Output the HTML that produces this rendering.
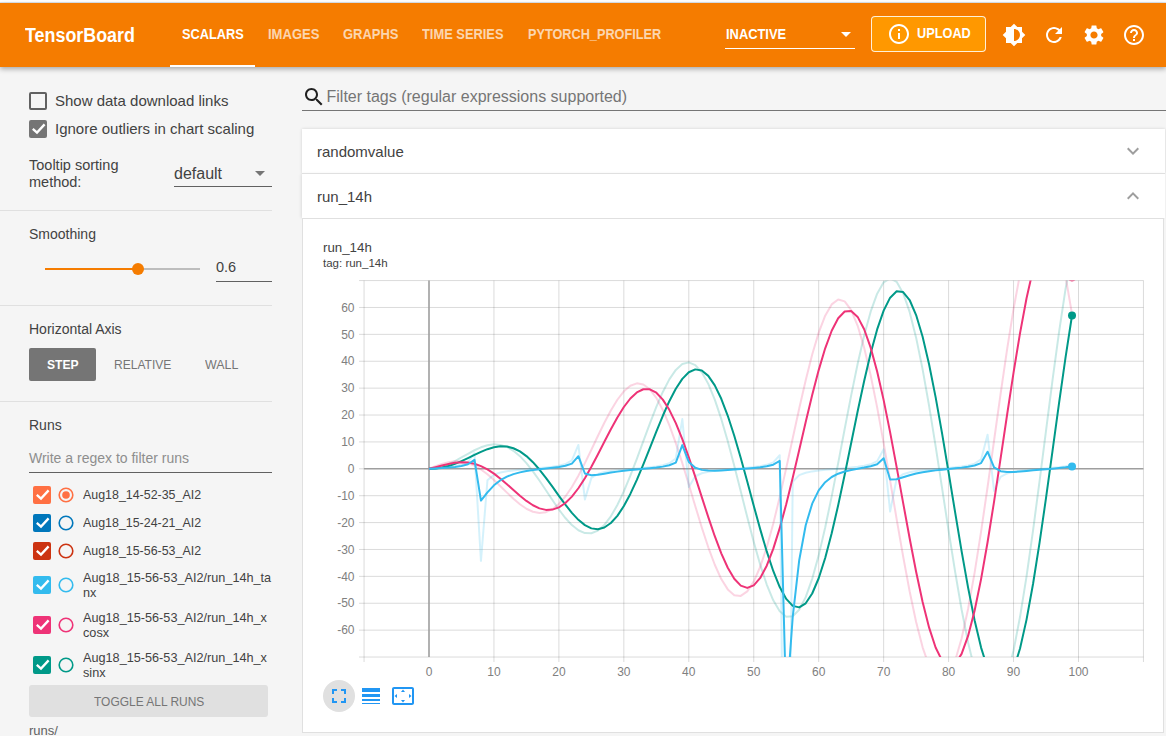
<!DOCTYPE html>
<html><head><meta charset="utf-8">
<style>
*{box-sizing:border-box;margin:0;padding:0}
html,body{width:1166px;height:736px;overflow:hidden;background:#f5f5f5;font-family:"Liberation Sans",sans-serif;position:relative}
.a{position:absolute;white-space:nowrap}
#top{left:0;top:0;width:1166px;height:3px;background:#fff}
#hdr{left:0;top:3px;width:1166px;height:64px;background:#f57c00;box-shadow:0 2px 5px rgba(0,0,0,.32);z-index:2}
.tab{font-weight:bold;font-size:14px;color:rgba(255,255,255,.7);top:23px;transform-origin:0 0}
.sx{transform-origin:0 0}
.ico{position:absolute;width:24px;height:24px}
.side{color:#424242}
.divider{position:absolute;left:0;width:272px;height:1px;background:#e0e0e0}
</style></head><body>
<div class="a" id="top"></div><div class="a" style="left:0;top:2px;width:1166px;height:1px;background:#dfe7ef"></div>
<div class="a" id="hdr">
  <div class="a sx" style="left:25px;top:21px;font-size:20px;font-weight:bold;color:#fff;transform:scaleX(0.894)">TensorBoard</div>
  <div class="a tab" style="left:182px;color:#fff;transform:scaleX(0.912)">SCALARS</div>
  <div class="a" style="left:170px;top:62px;width:85px;height:2px;background:#fff"></div>
  <div class="a tab" style="left:267.5px;transform:scaleX(0.931)">IMAGES</div>
  <div class="a tab" style="left:343px;transform:scaleX(0.927)">GRAPHS</div>
  <div class="a tab" style="left:422px;transform:scaleX(0.919)">TIME SERIES</div>
  <div class="a tab" style="left:527.5px;transform:scaleX(0.907)">PYTORCH_PROFILER</div>
  <div class="a tab" style="left:725.5px;color:#fff;transform:scaleX(0.92)">INACTIVE</div>
  <div class="a" style="left:841px;top:29px;width:0;height:0;border-left:5px solid transparent;border-right:5px solid transparent;border-top:5px solid #fff"></div>
  <div class="a" style="left:725px;top:45px;width:130px;height:1px;background:#fff"></div>
  <div class="a" style="left:871px;top:13px;width:115px;height:36px;border:1px solid rgba(255,255,255,.85);border-radius:4px;background:#ff9800"></div>
  <svg class="ico" style="left:887px;top:19px" viewBox="0 0 24 24"><path fill="#fff" d="M11 7h2v2h-2zm0 4h2v6h-2zm1-9C6.48 2 2 6.48 2 12s4.48 10 10 10 10-4.48 10-10S17.52 2 12 2zm0 18c-4.41 0-8-3.59-8-8s3.59-8 8-8 8 3.59 8 8-3.59 8-8 8z"/></svg>
  <div class="a tab" style="left:917px;top:22px;color:#fff;transform:scaleX(0.91)">UPLOAD</div>
  <svg class="ico" style="left:1002px;top:20px" viewBox="0 0 24 24"><path fill="#fff" d="M20 15.31L23.31 12 20 8.69V4h-4.69L12 .69 8.69 4H4v4.69L.69 12 4 15.31V20h4.69L12 23.31 15.31 20H20v-4.69zM12 18V6c3.31 0 6 2.69 6 6s-2.69 6-6 6z"/></svg>
  <svg class="ico" style="left:1042px;top:20px" viewBox="0 0 24 24"><path fill="#fff" d="M17.65 6.35C16.2 4.9 14.21 4 12 4c-4.42 0-7.99 3.58-7.99 8s3.57 8 7.99 8c3.73 0 6.84-2.55 7.73-6h-2.08c-.82 2.33-3.04 4-5.65 4-3.31 0-6-2.69-6-6s2.69-6 6-6c1.66 0 3.14.69 4.22 1.78L13 11h7V4l-2.35 2.35z"/></svg>
  <svg class="ico" style="left:1082px;top:20px" viewBox="0 0 24 24"><path fill="#fff" d="M19.14 12.94c.04-.3.06-.61.06-.94 0-.32-.02-.64-.07-.94l2.03-1.58c.18-.14.23-.41.12-.61l-1.92-3.32c-.12-.22-.37-.29-.59-.22l-2.39.96c-.5-.38-1.03-.7-1.62-.94l-.36-2.54c-.04-.24-.24-.41-.48-.41h-3.84c-.24 0-.43.17-.47.41l-.36 2.54c-.59.24-1.13.57-1.62.94l-2.39-.96c-.22-.08-.47 0-.59.22L2.74 8.87c-.12.21-.08.47.12.61l2.030 1.58c-.05.3-.09.63-.09.94s.02.64.07.94l-2.030 1.58c-.18.14-.23.41-.12.61l1.92 3.32c.12.22.37.29.59.22l2.39-.96c.5.38 1.03.7 1.62.94l.36 2.54c.05.24.24.41.48.41h3.84c.24 0 .44-.17.47-.41l.36-2.54c.59-.24 1.13-.56 1.62-.94l2.39.96c.22.08.47 0 .59-.22l1.92-3.32c.12-.22.07-.47-.12-.61l-2.01-1.58zM12 15.6c-1.98 0-3.6-1.62-3.6-3.6s1.62-3.6 3.6-3.6 3.6 1.62 3.6 3.6-1.62 3.6-3.6 3.6z"/></svg>
  <svg class="ico" style="left:1122px;top:20px" viewBox="0 0 24 24"><path fill="#fff" d="M11 18h2v-2h-2v2zm1-16C6.48 2 2 6.48 2 12s4.48 10 10 10 10-4.48 10-10S17.52 2 12 2zm0 18c-4.41 0-8-3.59-8-8s3.59-8 8-8 8 3.59 8 8-3.59 8-8 8zm0-14c-2.21 0-4 1.79-4 4h2c0-1.1.9-2 2-2s2 .9 2 2c0 2-3 1.75-3 5h2c0-2.25 3-2.5 3-5 0-2.21-1.79-4-4-4z"/></svg>
</div>
<!-- SIDEBAR -->
<div class="a" style="left:29px;top:92px;width:18px;height:18px;border:2px solid #616161;border-radius:2px"></div>
<div class="a side" style="left:55px;top:92px;font-size:15px">Show data download links</div>
<div class="a" style="left:29px;top:120px;width:18px;height:18px;background:#757575;border-radius:2px"></div>
<svg class="a" style="left:29px;top:120px" width="18" height="18" viewBox="0 0 18 18"><path d="M3.8 8.8L8 12.6L15.6 4.4" stroke="#fff" stroke-width="2.3" fill="none"/></svg>
<div class="a side" style="left:55px;top:120px;font-size:15px">Ignore outliers in chart scaling</div>
<div class="a side" style="left:29px;top:157px;font-size:14.5px;line-height:16.5px;color:#424242">Tooltip sorting<br>method:</div>
<div class="a side" style="left:174px;top:164.5px;font-size:16px;color:#424242">default</div>
<div class="a" style="left:255px;top:171px;width:0;height:0;border-left:5px solid transparent;border-right:5px solid transparent;border-top:5px solid #757575"></div>
<div class="a" style="left:174px;top:186px;width:98px;height:1px;background:#616161"></div>
<div class="divider" style="top:210px"></div>
<div class="a side" style="left:29px;top:226px;font-size:14px;color:#424242">Smoothing</div>
<div class="a" style="left:45px;top:268px;width:92px;height:2px;background:#f57c00"></div>
<div class="a" style="left:137px;top:268px;width:63px;height:2px;background:#bdbdbd"></div>
<div class="a" style="left:131.7px;top:263px;width:12.2px;height:12.2px;border-radius:50%;background:#f57c00"></div>
<div class="a side" style="left:216px;top:259px;font-size:14.5px;color:#424242">0.6</div>
<div class="a" style="left:216px;top:281px;width:56px;height:1px;background:#616161"></div>
<div class="divider" style="top:305px"></div>
<div class="a side" style="left:29px;top:321px;font-size:14px;color:#424242">Horizontal Axis</div>
<div class="a" style="left:29px;top:348px;width:67px;height:33px;background:#757575;border-radius:2px"></div>
<div class="a sx" style="left:46.8px;top:357px;font-size:13px;font-weight:bold;color:#fff;transform:scaleX(0.93)">STEP</div>
<div class="a sx" style="left:113.6px;top:357px;font-size:13px;color:#757575;transform:scaleX(0.926)">RELATIVE</div>
<div class="a sx" style="left:204.6px;top:357px;font-size:13px;color:#757575;transform:scaleX(0.956)">WALL</div>
<div class="divider" style="top:401px"></div>
<div class="a side" style="left:29px;top:417px;font-size:14px;color:#424242">Runs</div>
<div class="a" style="left:29px;top:450px;font-size:14px;color:#8e8e8e">Write a regex to filter runs</div>
<div class="a" style="left:29px;top:472px;width:243px;height:1px;background:#616161"></div>
<div class="a" style="left:33px;top:486px;width:18px;height:18px;background:#ff7043;border-radius:2px"></div>
<svg class="a" style="left:33px;top:486px" width="18" height="18" viewBox="0 0 18 18"><path d="M3.8 8.8L8 12.6L15.6 4.4" stroke="#fff" stroke-width="2.3" fill="none"/></svg>
<svg class="a" style="left:58px;top:487px" width="16" height="16" viewBox="0 0 16 16"><circle cx="8" cy="8" r="6.8" stroke="#ff7043" stroke-width="1.6" fill="none"/><circle cx="8" cy="8" r="3.8" fill="#ff7043"/></svg>
<div class="a sx" style="left:83.2px;top:486.5px;font-size:13px;color:#424242;transform:scaleX(0.955)">Aug18_14-52-35_AI2</div>
<div class="a" style="left:33px;top:514px;width:18px;height:18px;background:#0077bb;border-radius:2px"></div>
<svg class="a" style="left:33px;top:514px" width="18" height="18" viewBox="0 0 18 18"><path d="M3.8 8.8L8 12.6L15.6 4.4" stroke="#fff" stroke-width="2.3" fill="none"/></svg>
<svg class="a" style="left:58px;top:515px" width="16" height="16" viewBox="0 0 16 16"><circle cx="8" cy="8" r="6.8" stroke="#0077bb" stroke-width="1.6" fill="none"/></svg>
<div class="a sx" style="left:83.2px;top:514.5px;font-size:13px;color:#424242;transform:scaleX(0.955)">Aug18_15-24-21_AI2</div>
<div class="a" style="left:33px;top:542px;width:18px;height:18px;background:#cc3311;border-radius:2px"></div>
<svg class="a" style="left:33px;top:542px" width="18" height="18" viewBox="0 0 18 18"><path d="M3.8 8.8L8 12.6L15.6 4.4" stroke="#fff" stroke-width="2.3" fill="none"/></svg>
<svg class="a" style="left:58px;top:543px" width="16" height="16" viewBox="0 0 16 16"><circle cx="8" cy="8" r="6.8" stroke="#cc3311" stroke-width="1.6" fill="none"/></svg>
<div class="a sx" style="left:83.2px;top:542.5px;font-size:13px;color:#424242;transform:scaleX(0.955)">Aug18_15-56-53_AI2</div>
<div class="a" style="left:33px;top:576px;width:18px;height:18px;background:#33bbee;border-radius:2px"></div>
<svg class="a" style="left:33px;top:576px" width="18" height="18" viewBox="0 0 18 18"><path d="M3.8 8.8L8 12.6L15.6 4.4" stroke="#fff" stroke-width="2.3" fill="none"/></svg>
<svg class="a" style="left:58px;top:577px" width="16" height="16" viewBox="0 0 16 16"><circle cx="8" cy="8" r="6.8" stroke="#33bbee" stroke-width="1.6" fill="none"/></svg>
<div class="a sx" style="left:83.2px;top:571.0px;font-size:13px;line-height:14.5px;color:#424242;transform:scaleX(0.975)">Aug18_15-56-53_AI2/run_14h_ta<br>nx</div>
<div class="a" style="left:33px;top:616px;width:18px;height:18px;background:#ee3377;border-radius:2px"></div>
<svg class="a" style="left:33px;top:616px" width="18" height="18" viewBox="0 0 18 18"><path d="M3.8 8.8L8 12.6L15.6 4.4" stroke="#fff" stroke-width="2.3" fill="none"/></svg>
<svg class="a" style="left:58px;top:617px" width="16" height="16" viewBox="0 0 16 16"><circle cx="8" cy="8" r="6.8" stroke="#ee3377" stroke-width="1.6" fill="none"/></svg>
<div class="a sx" style="left:83.2px;top:611.0px;font-size:13px;line-height:14.5px;color:#424242;transform:scaleX(0.975)">Aug18_15-56-53_AI2/run_14h_x<br>cosx</div>
<div class="a" style="left:33px;top:656px;width:18px;height:18px;background:#009988;border-radius:2px"></div>
<svg class="a" style="left:33px;top:656px" width="18" height="18" viewBox="0 0 18 18"><path d="M3.8 8.8L8 12.6L15.6 4.4" stroke="#fff" stroke-width="2.3" fill="none"/></svg>
<svg class="a" style="left:58px;top:657px" width="16" height="16" viewBox="0 0 16 16"><circle cx="8" cy="8" r="6.8" stroke="#009988" stroke-width="1.6" fill="none"/></svg>
<div class="a sx" style="left:83.2px;top:651.0px;font-size:13px;line-height:14.5px;color:#424242;transform:scaleX(0.975)">Aug18_15-56-53_AI2/run_14h_x<br>sinx</div>
<div class="a" style="left:29px;top:685px;width:239px;height:32px;background:#e0e0e0;border-radius:3px"></div>
<div class="a sx" style="left:93.9px;top:694px;font-size:13px;color:#757575;transform:scaleX(0.92)">TOGGLE ALL RUNS</div>
<div class="a side" style="left:29px;top:723px;font-size:13px;color:#616161">runs/</div>
<!-- MAIN -->
<svg class="ico" style="left:302px;top:85px" viewBox="0 0 24 24"><path fill="#212121" d="M15.5 14h-.79l-.28-.27C15.41 12.59 16 11.11 16 9.5 16 5.91 13.09 3 9.5 3S3 5.91 3 9.5 5.91 16 9.5 16c1.61 0 3.09-.59 4.23-1.57l.27.28v.79l5 4.99L20.49 19l-4.99-5zm-6 0C7.01 14 5 11.99 5 9.5S7.01 5 9.5 5 14 7.01 14 9.5 11.99 14 9.5 14z"/></svg>
<div class="a" style="left:326.5px;top:88px;font-size:16px;color:#757575">Filter tags (regular expressions supported)</div>
<div class="a" style="left:302px;top:110px;width:864px;height:1px;background:#757575"></div>
<div class="a" style="left:302px;top:129px;width:863px;height:44px;background:#fff;box-shadow:0 0 3px rgba(0,0,0,.15)"></div>
<div class="a" style="left:317px;top:143px;font-size:15px;color:#424242">randomvalue</div>
<svg class="ico" style="left:1121px;top:139px" viewBox="0 0 24 24"><path fill="#9e9e9e" d="M16.59 8.59L12 13.17 7.41 8.59 6 10l6 6 6-6z"/></svg>
<div class="a" style="left:302px;top:174px;width:863px;height:44px;background:#fff;box-shadow:-1px 0 3px rgba(0,0,0,.1)"></div>
<div class="a" style="left:302px;top:173px;width:863px;height:1px;background:#e0e0e0"></div>
<div class="a" style="left:317px;top:188px;font-size:15px;color:#424242">run_14h</div>
<svg class="ico" style="left:1121px;top:184px" viewBox="0 0 24 24"><path fill="#9e9e9e" d="M12 8l-6 6 1.41 1.41L12 10.83l4.59 4.58L18 14z"/></svg>
<div class="a" style="left:302px;top:218px;width:862px;height:515px;background:#fff;border:1px solid #e0e0e0"></div>
<div class="a" style="left:323px;top:240px;font-size:13.3px;color:#424242">run_14h</div>
<div class="a" style="left:323px;top:257px;font-size:11.5px;color:#424242">tag: run_14h</div>
<svg class="a" style="left:0;top:0" width="1166" height="736" viewBox="0 0 1166 736">
<defs><clipPath id="cp"><rect x="364.05" y="280.57" width="779.40" height="376.46"/></clipPath></defs>
<g stroke="#000" stroke-opacity="0.145" stroke-width="1"><line x1="364.05" y1="280.57" x2="364.05" y2="662.03"/><line x1="493.95" y1="280.57" x2="493.95" y2="662.03"/><line x1="558.90" y1="280.57" x2="558.90" y2="662.03"/><line x1="623.85" y1="280.57" x2="623.85" y2="662.03"/><line x1="688.80" y1="280.57" x2="688.80" y2="662.03"/><line x1="753.75" y1="280.57" x2="753.75" y2="662.03"/><line x1="818.70" y1="280.57" x2="818.70" y2="662.03"/><line x1="883.65" y1="280.57" x2="883.65" y2="662.03"/><line x1="948.60" y1="280.57" x2="948.60" y2="662.03"/><line x1="1013.55" y1="280.57" x2="1013.55" y2="662.03"/><line x1="1078.50" y1="280.57" x2="1078.50" y2="662.03"/><line x1="1143.45" y1="280.57" x2="1143.45" y2="662.03"/><line x1="359.05" y1="657.03" x2="1143.45" y2="657.03"/><line x1="359.05" y1="630.14" x2="1143.45" y2="630.14"/><line x1="359.05" y1="603.25" x2="1143.45" y2="603.25"/><line x1="359.05" y1="576.36" x2="1143.45" y2="576.36"/><line x1="359.05" y1="549.47" x2="1143.45" y2="549.47"/><line x1="359.05" y1="522.58" x2="1143.45" y2="522.58"/><line x1="359.05" y1="495.69" x2="1143.45" y2="495.69"/><line x1="359.05" y1="468.80" x2="364.05" y2="468.80"/><line x1="359.05" y1="441.91" x2="1143.45" y2="441.91"/><line x1="359.05" y1="415.02" x2="1143.45" y2="415.02"/><line x1="359.05" y1="388.13" x2="1143.45" y2="388.13"/><line x1="359.05" y1="361.24" x2="1143.45" y2="361.24"/><line x1="359.05" y1="334.35" x2="1143.45" y2="334.35"/><line x1="359.05" y1="307.46" x2="1143.45" y2="307.46"/><line x1="359.05" y1="280.57" x2="1143.45" y2="280.57"/></g>
<g stroke="#9e9e9e" stroke-width="1.6"><line x1="429.00" y1="280.57" x2="429.00" y2="657.03"/><line x1="364.05" y1="468.80" x2="1143.45" y2="468.80"/></g>
<g font-family="Liberation Sans" font-size="12" fill="#808080"><text x="354.5" y="634.34" text-anchor="end">-60</text><text x="354.5" y="607.45" text-anchor="end">-50</text><text x="354.5" y="580.56" text-anchor="end">-40</text><text x="354.5" y="553.67" text-anchor="end">-30</text><text x="354.5" y="526.78" text-anchor="end">-20</text><text x="354.5" y="499.89" text-anchor="end">-10</text><text x="354.5" y="473.00" text-anchor="end">0</text><text x="354.5" y="446.11" text-anchor="end">10</text><text x="354.5" y="419.22" text-anchor="end">20</text><text x="354.5" y="392.33" text-anchor="end">30</text><text x="354.5" y="365.44" text-anchor="end">40</text><text x="354.5" y="338.55" text-anchor="end">50</text><text x="354.5" y="311.66" text-anchor="end">60</text><text x="429.00" y="676" text-anchor="middle">0</text><text x="493.95" y="676" text-anchor="middle">10</text><text x="558.90" y="676" text-anchor="middle">20</text><text x="623.85" y="676" text-anchor="middle">30</text><text x="688.80" y="676" text-anchor="middle">40</text><text x="753.75" y="676" text-anchor="middle">50</text><text x="818.70" y="676" text-anchor="middle">60</text><text x="883.65" y="676" text-anchor="middle">70</text><text x="948.60" y="676" text-anchor="middle">80</text><text x="1013.55" y="676" text-anchor="middle">90</text><text x="1078.50" y="676" text-anchor="middle">100</text></g>
<g clip-path="url(#cp)" stroke-linejoin="round"><path d="M429.00,468.80L435.50,468.27L441.99,466.71L448.49,464.25L454.98,461.08L461.48,457.49L467.97,453.76L474.47,450.25L480.96,447.30L487.45,445.23L493.95,444.35L500.44,444.89L506.94,447.00L513.43,450.78L519.93,456.19L526.42,463.11L532.92,471.31L539.41,480.48L545.91,490.22L552.40,500.06L558.90,509.50L565.39,518.02L571.89,525.09L578.38,530.26L584.88,533.09L591.38,533.26L597.87,530.57L604.37,524.91L610.86,516.33L617.36,505.03L623.85,491.34L630.35,475.73L636.84,458.77L643.34,441.15L649.83,423.63L656.33,406.97L662.82,391.97L669.32,379.38L675.81,369.90L682.31,364.08L688.80,362.38L695.30,365.09L701.79,372.28L708.29,383.88L714.78,399.59L721.27,418.93L727.77,441.23L734.26,465.67L740.76,491.30L747.25,517.09L753.75,541.94L760.25,564.78L766.74,584.55L773.24,600.31L779.73,611.24L786.23,616.69L792.72,616.25L799.22,609.71L805.71,597.13L812.20,578.83L818.70,555.37L825.19,527.56L831.69,496.41L838.18,463.10L844.68,428.96L851.17,395.36L857.67,363.72L864.16,335.41L870.66,311.70L877.15,293.71L883.65,282.34L890.14,278.26L896.64,281.84L903.13,293.16L909.63,311.95L916.12,337.65L922.62,369.40L929.12,406.04L935.61,446.20L942.11,488.32L948.60,530.73L955.10,571.70L961.59,609.50L968.09,642.52L974.58,669.28L981.08,688.54L987.57,699.34L994.07,701.03L1000.56,693.33L1007.06,676.34L1013.55,650.55L1020.04,616.80L1026.54,576.31L1033.03,530.56L1039.53,481.32L1046.03,430.51L1052.52,380.18L1059.01,332.37L1065.51,289.09L1072.01,252.19" stroke="#009988" stroke-opacity="0.21" stroke-width="2" fill="none"/><path d="M429.00,468.80L435.50,466.16L441.99,463.85L448.49,462.14L454.98,461.31L461.48,461.54L467.97,462.95L474.47,465.60L480.96,469.43L487.45,474.30L493.95,479.99L500.44,486.21L506.94,492.59L513.43,498.75L519.93,504.27L526.42,508.73L532.92,511.75L539.41,513.00L545.91,512.20L552.40,509.21L558.90,503.95L565.39,496.48L571.89,486.98L578.38,475.74L584.88,463.15L591.38,449.73L597.87,436.04L604.37,422.72L610.86,410.41L617.36,399.75L623.85,391.34L630.35,385.73L636.84,383.34L643.34,384.48L649.83,389.31L656.33,397.85L662.82,409.91L669.32,425.17L675.81,443.13L682.31,463.14L688.80,484.45L695.30,506.19L701.79,527.45L708.29,547.28L714.78,564.77L721.27,579.05L727.77,589.38L734.26,595.14L740.76,595.90L747.25,591.39L753.75,581.61L760.25,566.75L766.74,547.24L773.24,523.72L779.73,497.02L786.23,468.15L792.72,438.23L799.22,408.49L805.71,380.17L812.20,354.50L818.70,332.65L825.19,315.66L831.69,304.38L838.18,299.49L844.68,301.38L851.17,310.19L857.67,325.78L864.16,347.70L870.66,375.23L877.15,407.42L883.65,443.06L890.14,480.79L896.64,519.10L903.13,556.44L909.63,591.25L916.12,622.01L922.62,647.36L929.12,666.11L935.61,677.32L942.11,680.33L948.60,674.81L955.10,660.77L961.59,638.57L968.09,608.92L974.58,572.86L981.08,531.69L987.57,486.99L994.07,440.51L1000.56,394.08L1007.06,349.63L1013.55,309.00L1020.04,273.93L1026.54,245.99L1033.03,226.47L1039.53,216.34L1046.03,216.23L1052.52,226.35L1059.01,246.49L1065.51,276.06L1072.01,314.05" stroke="#ee3377" stroke-opacity="0.21" stroke-width="2" fill="none"/><path d="M429.00,468.80L435.50,468.25L441.99,467.66L448.49,466.96L454.98,466.03L461.48,464.61L467.97,461.88L474.47,453.21L480.96,560.85L487.45,480.33L493.95,474.68L500.44,472.49L506.94,471.26L513.43,470.42L519.93,469.76L526.42,469.18L532.92,468.64L539.41,468.09L545.91,467.47L552.40,466.72L558.90,465.69L565.39,464.02L571.89,460.47L578.38,444.97L584.88,499.41L591.38,477.89L597.87,473.87L604.37,472.07L610.86,470.99L617.36,470.21L623.85,469.58L630.35,469.02L636.84,468.48L643.34,467.92L649.83,467.27L656.33,466.46L662.82,465.29L669.32,463.29L675.81,458.44L682.31,419.04L688.80,487.08L695.30,476.26L701.79,473.23L708.29,471.71L714.78,470.74L721.27,470.02L727.77,469.41L734.26,468.87L740.76,468.32L747.25,467.74L753.75,467.06L760.25,466.17L766.74,464.83L773.24,462.36L779.73,455.23L786.23,1076.38L792.72,481.77L799.22,475.08L805.71,472.69L812.20,471.39L818.70,470.51L825.19,469.83L831.69,469.25L838.18,468.71L844.68,468.16L851.17,467.55L857.67,466.82L864.16,465.84L870.66,464.29L877.15,461.13L883.65,449.32L890.14,511.54L896.64,478.79L903.13,474.19L909.63,472.24L916.12,471.10L922.62,470.30L929.12,469.66L935.61,469.09L942.11,468.55L948.60,467.99L955.10,467.36L961.59,466.57L968.09,465.47L974.58,463.62L981.08,459.40L987.57,434.73L994.07,490.87L1000.56,476.88L1007.06,473.48L1013.55,471.86L1020.04,470.84L1026.54,470.10L1033.03,469.49L1039.53,468.93L1046.03,468.39L1052.52,467.82L1059.01,467.15L1065.51,466.29L1072.01,465.04" stroke="#33bbee" stroke-opacity="0.21" stroke-width="2" fill="none"/><path d="M429.00,468.80L435.50,468.47L441.99,467.57L448.49,466.04L454.98,463.89L461.48,461.20L467.97,458.14L474.47,454.93L480.96,451.85L487.45,449.18L493.95,447.24L500.44,446.30L506.94,446.58L513.43,448.26L519.93,451.43L526.42,456.10L532.92,462.19L539.41,469.51L545.91,477.79L552.40,486.70L558.90,495.82L565.39,504.70L571.89,512.86L578.38,519.82L584.88,525.13L591.38,528.38L597.87,529.25L604.37,527.51L610.86,523.04L617.36,515.84L623.85,506.04L630.35,493.91L636.84,479.86L643.34,464.38L649.83,448.08L656.33,431.63L662.82,415.77L669.32,401.21L675.81,388.69L682.31,378.84L688.80,372.26L695.30,369.39L701.79,370.55L708.29,375.88L714.78,385.37L721.27,398.79L727.77,415.77L734.26,435.73L740.76,457.96L747.25,481.61L753.75,505.74L760.25,529.36L766.74,551.44L773.24,570.99L779.73,587.09L786.23,598.93L792.72,605.86L799.22,607.40L805.71,603.29L812.20,593.51L818.70,578.25L825.19,557.98L831.69,533.35L838.18,505.25L844.68,474.73L851.17,442.98L857.67,411.28L864.16,380.93L870.66,353.24L877.15,329.43L883.65,310.59L890.14,297.66L896.64,291.33L903.13,292.06L909.63,300.02L916.12,315.07L922.62,336.80L929.12,364.50L935.61,397.18L942.11,433.64L948.60,472.48L955.10,512.16L961.59,551.10L968.09,587.67L974.58,620.31L981.08,647.60L987.57,668.30L994.07,681.39L1000.56,686.16L1007.06,682.23L1013.55,669.56L1020.04,648.46L1026.54,619.60L1033.03,583.98L1039.53,542.92L1046.03,497.96L1052.52,450.84L1059.01,403.45L1065.51,357.71L1072.01,315.50" stroke="#009988" stroke-width="2" fill="none"/><path d="M429.00,468.80L435.50,467.15L441.99,465.47L448.49,463.94L454.98,462.80L461.48,462.27L467.97,462.55L474.47,463.79L480.96,466.07L487.45,469.38L493.95,473.64L500.44,478.68L506.94,484.25L513.43,490.06L519.93,495.75L526.42,500.94L532.92,505.27L539.41,508.36L545.91,509.90L552.40,509.62L558.90,507.35L565.39,503.01L571.89,496.60L578.38,488.25L584.88,478.21L591.38,466.82L597.87,454.51L604.37,441.79L610.86,429.24L617.36,417.44L623.85,407.00L630.35,398.49L636.84,392.43L643.34,389.25L649.83,389.28L656.33,392.70L662.82,399.59L669.32,409.82L675.81,423.14L682.31,439.14L688.80,457.26L695.30,476.84L701.79,497.08L708.29,517.16L714.78,536.20L721.27,553.34L727.77,567.76L734.26,578.71L740.76,585.59L747.25,587.91L753.75,585.39L760.25,577.94L766.74,565.66L773.24,548.88L779.73,528.14L786.23,504.14L792.72,477.78L799.22,450.06L805.71,422.10L812.20,395.06L818.70,370.10L825.19,348.32L831.69,330.75L838.18,318.24L844.68,311.50L851.17,310.98L857.67,316.90L864.16,329.22L870.66,347.62L877.15,371.54L883.65,400.15L890.14,432.41L896.64,467.08L903.13,502.83L909.63,538.20L916.12,571.72L922.62,601.98L929.12,627.63L935.61,647.51L942.11,660.64L948.60,666.31L955.10,664.09L961.59,653.88L968.09,635.90L974.58,610.68L981.08,579.09L987.57,542.25L994.07,501.55L1000.56,458.57L1007.06,414.99L1013.55,372.59L1020.04,333.13L1026.54,298.27L1033.03,269.55L1039.53,248.27L1046.03,235.45L1052.52,231.81L1059.01,237.68L1065.51,253.04L1072.01,277.44" stroke="#ee3377" stroke-width="2" fill="none"/><path d="M429.00,468.80L435.50,468.46L441.99,468.05L448.49,467.55L454.98,466.89L461.48,465.94L467.97,464.27L474.47,459.77L480.96,500.61L487.45,492.45L493.95,485.31L500.44,480.17L506.94,476.61L513.43,474.13L519.93,472.38L526.42,471.10L532.92,470.12L539.41,469.31L545.91,468.57L552.40,467.83L558.90,466.97L565.39,465.79L571.89,463.66L578.38,456.19L584.88,473.48L591.38,475.24L597.87,474.69L604.37,473.65L610.86,472.58L617.36,471.63L623.85,470.81L630.35,470.10L636.84,469.45L643.34,468.84L649.83,468.21L656.33,467.51L662.82,466.62L669.32,465.29L675.81,462.55L682.31,445.14L688.80,461.92L695.30,467.66L701.79,469.88L708.29,470.61L714.78,470.66L721.27,470.40L727.77,470.01L734.26,469.55L740.76,469.06L747.25,468.53L753.75,467.94L760.25,467.23L766.74,466.27L773.24,464.71L779.73,460.91L786.23,707.10L792.72,616.97L799.22,560.21L805.71,525.21L812.20,503.68L818.70,490.41L825.19,482.18L831.69,477.01L838.18,473.69L844.68,471.48L851.17,469.91L857.67,468.67L864.16,467.54L870.66,466.24L877.15,464.19L883.65,458.24L890.14,479.56L896.64,479.26L903.13,477.23L909.63,475.24L916.12,473.58L922.62,472.27L929.12,471.22L935.61,470.37L942.11,469.64L948.60,468.98L955.10,468.33L961.59,467.63L968.09,466.76L974.58,465.51L981.08,463.07L987.57,451.73L994.07,467.39L1000.56,471.18L1007.06,472.10L1013.55,472.01L1020.04,471.54L1026.54,470.96L1033.03,470.37L1039.53,469.80L1046.03,469.23L1052.52,468.67L1059.01,468.06L1065.51,467.35L1072.01,466.43" stroke="#33bbee" stroke-width="2" fill="none"/><circle cx="1072.01" cy="315.50" r="4" fill="#009988"/><circle cx="1072.01" cy="277.44" r="4" fill="#ee3377"/><circle cx="1072.01" cy="466.43" r="4" fill="#33bbee"/></g>
</svg>
<div class="a" style="left:323px;top:680px;width:32px;height:32px;border-radius:50%;background:#e0e0e0"></div>
<svg class="ico" style="left:327px;top:684px" viewBox="0 0 24 24"><path fill="#2196f3" d="M7 14H5v5h5v-2H7v-3zm-2-4h2V7h3V5H5v5zm12 7h-3v2h5v-5h-2v3zM14 5v2h3v3h2V5h-5z"/></svg>
<svg class="ico" style="left:359px;top:684px" viewBox="0 0 24 24"><path fill="#2196f3" d="M3 17h18v-2H3v2zm0 3h18v-1H3v1zm0-7h18v-3H3v3zm0-9v4h18V4H3z"/></svg>
<svg class="ico" style="left:391px;top:684px" viewBox="0 0 24 24"><path fill="#2196f3" d="M12.01 5.5L10 8h4l-1.99-2.5zM18 10v4l2.5-1.99L18 10zM6 10l-2.5 2.01L6 14v-4zm8 6h-4l2.01 2.5L14 16zm7-13H3c-1.1 0-2 .9-2 2v14c0 1.1.9 2 2 2h18c1.1 0 2-.9 2-2V5c0-1.1-.9-2-2-2zm0 16.01H3V4.99h18v14.02z"/></svg>
</body></html>
